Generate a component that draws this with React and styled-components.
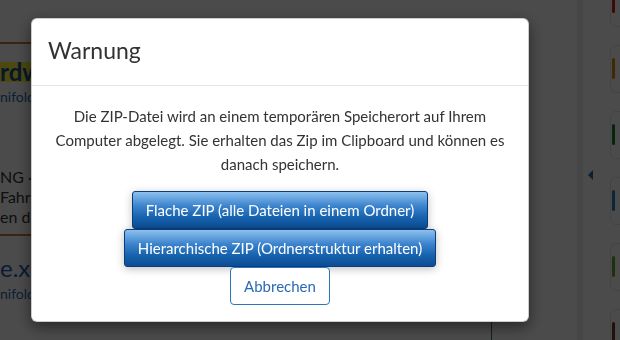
import React from "react";
import styled, { createGlobalStyle } from "styled-components";

const GlobalStyle = createGlobalStyle`
  html, body {
    margin: 0;
    padding: 0;
    width: 620px;
    height: 340px;
    overflow: hidden;
    background: #fff;
    font-family: Lato, "Liberation Sans", sans-serif;
  }
  * { box-sizing: border-box; }
`;

const cards = ["#c8222a", "#d98a10", "#1c7a2c", "#2a7fc0", "#6aa82a", "#6a3a2a"];

export default function App() {
  return (
    <>
      <GlobalStyle />
      <Page>
        <MainColumn>
          <Item>
            <ItemTitle>rdw</ItemTitle>
            <ItemMeta>nifold0</ItemMeta>
            <ItemText>
              <span>NG ·</span>
              <span>Fahrze</span>
              <span>en de</span>
            </ItemText>
          </Item>
          <Item>
            <ItemLink>e.xls</ItemLink>
            <ItemMeta>nifold0</ItemMeta>
          </Item>
        </MainColumn>
        <Splitter />
        <SidePanel>
          <Toggle />
          <CardList>
            {cards.map((c, i) => (
              <Card key={i} $color={c} />
            ))}
          </CardList>
        </SidePanel>
      </Page>
      <Overlay>
        <Modal>
          <Header>
            <Title>Warnung</Title>
          </Header>
          <Body>
            <Message>
              Die ZIP-Datei wird an einem temporären Speicherort auf Ihrem
              <br />
              Computer abgelegt. Sie erhalten das Zip im Clipboard und können es
              <br />
              danach speichern.
            </Message>
            <Actions>
              <PrimaryButton>Flache ZIP (alle Dateien in einem Ordner)</PrimaryButton>
              <PrimaryButton>Hierarchische ZIP (Ordnerstruktur erhalten)</PrimaryButton>
              <CancelButton>Abbrechen</CancelButton>
            </Actions>
          </Body>
        </Modal>
      </Overlay>
    </>
  );
}

const Page = styled.div`
  display: flex;
  width: 620px;
  height: 340px;
  overflow: hidden;
`;
const MainColumn = styled.div`
  flex-shrink: 0;
  width: 492px;
  height: 340px;
  padding-top: 42px;
  overflow: hidden;
  position: relative;
  &::after {
    content: "";
    position: absolute;
    right: 0;
    top: 300px;
    bottom: 0;
    width: 1px;
    background: #2f7a4a;
  }
`;
const Item = styled.div`
  border-top: 2px solid #c57a3a;
  padding-top: 18px;
  white-space: nowrap;
  & + & {
    padding-top: 19px;
  }
`;
const ItemTitle = styled.div`
  display: inline-block;
  background: #fff53a;
  color: #1b4f8c;
  font-size: 24px;
  font-weight: 700;
  line-height: 20px;
  height: 20px;
  padding-right: 20px;
`;
const ItemLink = styled.div`
  color: #1e63ad;
  font-size: 24px;
  line-height: 26px;
`;
const ItemMeta = styled.div`
  color: #2a6ab5;
  font-size: 14px;
  line-height: 20px;
  margin-top: 3px;
`;
const ItemText = styled.div`
  display: flex;
  flex-direction: column;
  margin-top: 60px;
  padding-bottom: 7px;
  color: #333;
  font-size: 16px;
  line-height: 20px;
`;
const Splitter = styled.div`
  flex-shrink: 0;
  width: 6px;
  margin-left: 85px;
  background: #eeeeee;
`;
const SidePanel = styled.div`
  flex-shrink: 0;
  width: 200px;
  display: flex;
  position: relative;
`;
const Toggle = styled.div`
  position: absolute;
  left: 5px;
  top: 170px;
  width: 0;
  height: 0;
  border-top: 5px solid transparent;
  border-bottom: 5px solid transparent;
  border-right: 5px solid #2a6ab5;
`;
const CardList = styled.div`
  display: flex;
  flex-direction: column;
  gap: 18px;
  margin-top: -21px;
  margin-left: 27px;
`;
const Card = styled.div`
  width: 60px;
  height: 48px;
  flex-shrink: 0;
  border: 1px solid #e6e6e6;
  border-radius: 6px;
  position: relative;
  &::before {
    content: "";
    position: absolute;
    left: 1px;
    top: 12px;
    width: 3px;
    height: 21px;
    border-radius: 2px;
    background: ${(p) => p.$color};
  }
`;

const Overlay = styled.div`
  position: fixed;
  inset: 0;
  background: rgba(0, 0, 0, 0.705);
  display: flex;
  align-items: flex-start;
  padding: 18px 0 0 31px;
`;
const Modal = styled.div`
  width: 498px;
  background: #fff;
  border: 1px solid rgba(0, 0, 0, 0.2);
  border-radius: 6px;
  box-shadow: 0 5px 15px rgba(0, 0, 0, 0.5);
  color: #333;
`;
const Header = styled.div`
  padding: 13px 16px 17px;
  border-bottom: 1px solid #e5e5e5;
`;
const Title = styled.h4`
  margin: 0;
  font-size: 23px;
  font-weight: 400;
  line-height: 36px;
  color: #333;
`;
const Body = styled.div`
  padding: 18px 15px 16px;
`;
const Message = styled.p`
  margin: 0;
  text-align: center;
  font-size: 15px;
  line-height: 24px;
`;
const Actions = styled.div`
  display: flex;
  flex-direction: column;
  align-items: center;
  margin-top: 15px;
`;
const PrimaryButton = styled.button`
  font-family: inherit;
  font-size: 15px;
  color: #fff;
  height: 38px;
  padding: 0 13px;
  border: 1px solid #0b3d78;
  border-radius: 3px;
  background: linear-gradient(to bottom, #8cc0ef 0%, #3a82cc 40%, #1762ae 70%, #0c4d94 100%);
  box-shadow: 0 2px 8px rgba(0, 0, 0, 0.25);
  cursor: pointer;
`;
const CancelButton = styled.button`
  font-family: inherit;
  font-size: 15px;
  color: #2a6ab5;
  height: 38px;
  padding: 0 13px;
  background: #fff;
  border: 1px solid #2f72bd;
  border-radius: 4px;
  cursor: pointer;
`;
